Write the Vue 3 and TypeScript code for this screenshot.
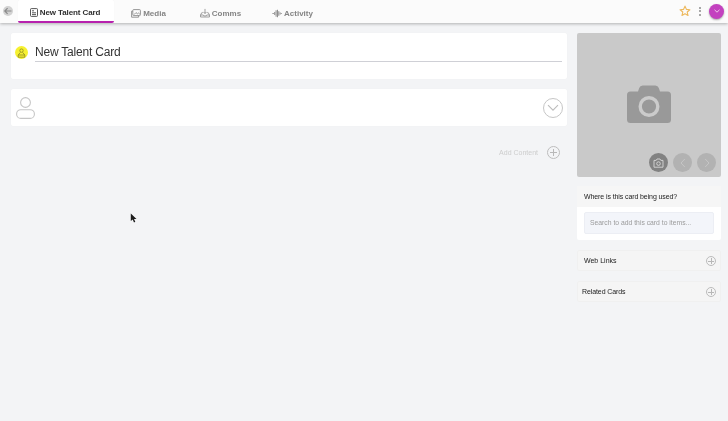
<script setup lang="ts">
const tabs = [
  { label: 'New Talent Card', key: 'card', active: true },
  { label: 'Media', key: 'media', active: false },
  { label: 'Comms', key: 'comms', active: false },
  { label: 'Activity', key: 'activity', active: false },
]
</script>

<template>
  <div class="page">
    <header class="topbar">
      <button class="back" aria-label="Back">
        <svg width="10" height="10" viewBox="0 0 10 10"><path d="M8.500 5H2M4.600 2.200 1.800 5l2.800 2.800" fill="none" stroke="#8a8a8a" stroke-width="1.200"/></svg>
      </button>
      <nav class="tabs">
        <div v-for="t in tabs" :key="t.key" class="tab" :class="[t.key, { active: t.active }]">
          <svg v-if="t.key === 'card'" width="8" height="9" viewBox="0 0 8 9" fill="none" stroke="#444" stroke-width="0.9"><rect x="0.5" y="0.6" width="7" height="7.8" rx="0.8"/><path d="M2 2.800h2M2 4.800h4M2 6.600h4"/></svg>
          <svg v-else-if="t.key === 'media'" width="10" height="9" viewBox="0 0 10 9" fill="none" stroke="#8a8a8a" stroke-width="0.9"><rect x="1.8" y="0.6" width="7.6" height="6" rx="0.8"/><path d="M1.800 2.200H.6v6h7V6.600M3 5.600l2-2 1.400 1.200 1-.8 1.500 1.300"/></svg>
          <svg v-else-if="t.key === 'comms'" width="10" height="10" viewBox="0 0 11 10" fill="none" stroke="#8a8a8a" stroke-width="0.9"><path d="M5.500.5v5M3.800 3.800l1.700 1.800 1.700-1.800M3 4.600H2L.6 7.200v2.200h9.800V7.200L9 4.600H8M.6 7.200h3l.6 1h2.600l.6-1h3"/></svg>
          <svg v-else width="10" height="9" viewBox="0 0 11 9" fill="none" stroke="#8a8a8a" stroke-width="1.100"><path d="M.5 4.500h1.500M3 2.800v3.400M4.500 1v7M6 .4v8.200M7.500 2v5M9 3.400v2.200M10 4.500h.8"/></svg>
          <span>{{ t.label }}</span>
        </div>
      </nav>
      <div class="actions">
        <svg class="star" width="12" height="12" viewBox="0 0 13 13"><path d="M6.500 1.200 8 4.700l3.800.4-2.900 2.500.9 3.800-3.300-2-3.300 2 .9-3.800L1.200 5.100 5 4.700z" fill="none" stroke="#edb95e" stroke-width="1.200" stroke-linejoin="round"/></svg>
        <div class="dots"><i></i><i></i><i></i></div>
        <div class="avatar">
          <svg width="8" height="6" viewBox="0 0 8 6"><path d="M1.500 1.800 4 4.200l2.500-2.400" fill="none" stroke="#f3d6ee" stroke-width="0.9"/></svg>
        </div>
      </div>
    </header>

    <main class="content">
      <section class="left">
        <div class="card title-card">
          <div class="badge">
            <svg width="9" height="10" viewBox="0 0 9 10" fill="none" stroke="#8f8a1e" stroke-width="0.8"><circle cx="4.500" cy="2.600" r="1.700"/><path d="M3.400 4.400 1.200 7v2.200h6.600V7L5.600 4.400"/><path d="M1.300 7h6.400"/></svg>
          </div>
          <div class="title-input">New Talent Card</div>
        </div>

        <div class="card person-card">
          <svg width="19" height="22" viewBox="0 0 19 22" fill="none" stroke="#c6c6c6" stroke-width="1.100"><circle cx="9.500" cy="5.500" r="4.900"/><rect x="0.600" y="12.700" width="17.800" height="8.700" rx="4.200"/></svg>
          <div class="chevron-circle">
            <svg width="12" height="8" viewBox="0 0 12 8"><path d="M1 1.200 6 6.200l5-5" fill="none" stroke="#bdbdbd" stroke-width="1.100"/></svg>
          </div>
        </div>

        <div class="add-row">
          <span>Add Content</span>
          <div class="plus large"></div>
        </div>
      </section>

      <aside class="right">
        <div class="photo">
          <svg class="camera" width="44" height="38" viewBox="0 0 44 38">
            <path d="M3.500 6.500H11l1.200-3.500Q13 .5 15.700.5h12.600q2.700 0 3.500 2.500L33 6.500h7.500q3.500 0 3.500 3.500v24.500q0 3.500-3.500 3.500h-37Q0 38 0 34.500V10q0-3.500 3.500-3.500z" fill="#999"/>
            <circle cx="22" cy="21.500" r="8.800" fill="none" stroke="#cbcbcb" stroke-width="3.400"/>
          </svg>
          <div class="photo-buttons">
            <div class="round dark">
              <svg width="11" height="10" viewBox="0 0 11 10" fill="none" stroke="#d8d8d8" stroke-width="0.9" stroke-linejoin="round"><path d="M1 2.400h2.200L4 1h3l.8 1.400H10v6.800H1z"/><circle cx="5.500" cy="5.600" r="1.800"/></svg>
            </div>
            <div class="round">
              <svg width="6" height="10" viewBox="0 0 6 10"><path d="M4.800 1 1 5l3.800 4" fill="none" stroke="#c6c6c6" stroke-width="1"/></svg>
            </div>
            <div class="round">
              <svg width="6" height="10" viewBox="0 0 6 10"><path d="M1.200 1 5 5 1.200 9" fill="none" stroke="#c6c6c6" stroke-width="1"/></svg>
            </div>
          </div>
        </div>

        <div class="usage">
          <div class="usage-head">Where is this card being used?</div>
          <div class="usage-body">
            <div class="search">Search to add this card to items...</div>
          </div>
        </div>

        <div class="side-row">
          <span>Web Links</span>
          <div class="plus"></div>
        </div>
        <div class="side-row related">
          <span>Related Cards</span>
          <div class="plus"></div>
        </div>
      </aside>
    </main>

    <svg class="cursor" width="8" height="11" viewBox="0 0 8 11"><path d="M.8.5v7.600l1.900-1.700 1.300 3 1.300-.6-1.300-2.900h2.500z" fill="#1c1c1c"/></svg>
  </div>
</template>

<style>
html, body { margin: 0; background: #f3f4f6; }
</style>

<style scoped>
.page {
  position: relative;
  width: 728px;
  height: 421px;
  overflow: hidden;
  background: #f3f4f6;
  font-family: "Liberation Sans", Arial, sans-serif;
  color: #333;
}
.topbar {
  height: 23px;
  box-sizing: border-box;
  display: flex;
  align-items: flex-start;
  background: #fbfbfb;
  box-shadow: 0 1px 3px rgba(0, 0, 0, 0.28);
  position: relative;
}
.back {
  width: 10px;
  height: 10px;
  margin: 6px 0 0 3px;
  padding: 0;
  border: 0;
  border-radius: 50%;
  background: #d2d2d2;
  display: flex;
  align-items: center;
  justify-content: center;
}
.tabs {
  display: flex;
  margin-left: 5px;
  will-change: opacity;
}
.tab {
  height: 23px;
  box-sizing: border-box;
  display: flex;
  align-items: center;
  justify-content: center;
  gap: 2px;
  padding-top: 3px;
  font-size: 8px;
  font-weight: 700;
  color: #858585;
  white-space: nowrap;
}
.tab.card { width: 96px; letter-spacing: -0.1px; padding-right: 2px; }
.tab.media { width: 69px; }
.tab.comms { width: 75px; }
.tab.activity { width: 69px; }
.tab.active {
  color: #2f2f2f;
  border-bottom: 2px solid #b721ae;
}
.actions {
  margin-left: auto;
  display: flex;
  align-items: center;
  height: 22px;
}
.star { margin-right: 8px; }
.dots {
  display: flex;
  flex-direction: column;
  gap: 1.500px;
  margin-right: 8px;
}
.dots i {
  width: 2px;
  height: 2px;
  background: #8d8d8d;
  border-radius: 50%;
}
.avatar {
  width: 15px;
  height: 15px;
  margin-right: 4px;
  border-radius: 50%;
  background: #c341bf;
  box-shadow: 0 1px 2px rgba(0, 0, 0, 0.35);
  display: flex;
  align-items: center;
  justify-content: center;
}
.content {
  display: flex;
  gap: 10px;
  padding: 10px 7px 0 11px;
  will-change: opacity;
}
.left { width: 556px; flex: none; }
.right { width: 144px; flex: none; }
.card {
  background: #fff;
  border-radius: 2px;
  box-shadow: 0 0 1px rgba(0, 0, 0, 0.06);
}
.title-card {
  height: 46px;
  box-sizing: border-box;
  display: flex;
  align-items: flex-start;
  padding: 12px 5px 0 4px;
}
.badge {
  width: 13px;
  height: 13px;
  margin-top: 1px;
  border-radius: 50%;
  background: #f6f130;
  display: flex;
  align-items: center;
  justify-content: center;
  flex: none;
}
.title-input {
  flex: 1;
  margin-left: 7px;
  height: 16px;
  border-bottom: 1px solid #cfd0d6;
  font-size: 12px;
  letter-spacing: -0.2px;
  line-height: 14px;
  color: #333;
}
.person-card {
  height: 37px;
  margin-top: 10px;
  box-sizing: border-box;
  display: flex;
  align-items: center;
  justify-content: space-between;
  padding: 0 4px 0 5px;
}
.chevron-circle {
  width: 18px;
  height: 18px;
  border: 1px solid #c6c6c6;
  border-radius: 50%;
  display: flex;
  align-items: center;
  justify-content: center;
}
.add-row {
  display: flex;
  align-items: center;
  justify-content: flex-end;
  gap: 9px;
  margin-top: 20px;
  padding-right: 7px;
  font-size: 7px;
  color: #cdcdcd;
}
.plus {
  width: 8px;
  height: 8px;
  border: 1px solid #bcbcbc;
  border-radius: 50%;
  flex: none;
  margin-top: 1px;
  background:
    linear-gradient(#b8b8b8, #b8b8b8) center / 6px 1px no-repeat,
    linear-gradient(#b8b8b8, #b8b8b8) center / 1px 6px no-repeat;
}
.plus.large {
  width: 11px;
  height: 11px;
  margin-top: 0;
  background:
    linear-gradient(#b8b8b8, #b8b8b8) center / 7px 1px no-repeat,
    linear-gradient(#b8b8b8, #b8b8b8) center / 1px 7px no-repeat;
}
.photo {
  height: 144px;
  background: #c9c9c9;
  border-radius: 2px;
  position: relative;
  display: flex;
  align-items: flex-start;
  justify-content: center;
}
.camera { margin-top: 52px; }
.photo-buttons {
  position: absolute;
  right: 5px;
  bottom: 5px;
  display: flex;
  gap: 5px;
}
.round {
  width: 19px;
  height: 19px;
  border-radius: 50%;
  background: #b2b2b2;
  display: flex;
  align-items: center;
  justify-content: center;
}
.round.dark { background: #828282; }
.usage {
  margin-top: 9px;
  background: #fff;
  border-radius: 2px;
}
.usage-head {
  height: 21px;
  padding-left: 7px;
  background: #f6f6f6;
  font-size: 7px;
  letter-spacing: -0.1px;
  line-height: 21px;
  color: #222;
}
.usage-body {
  padding: 5px 7px 6px 7px;
}
.search {
  height: 22px;
  padding-left: 5px;
  box-sizing: border-box;
  background: #f3f5fa;
  border: 1px solid #eceef4;
  border-radius: 2px;
  font-size: 6.800px;
  line-height: 20px;
  color: #9b9b9b;
}
.side-row {
  height: 21px;
  margin-top: 10px;
  box-sizing: border-box;
  display: flex;
  align-items: center;
  justify-content: space-between;
  padding: 0 4px 0 6px;
  background: #f5f5f5;
  border: 1px solid #f0f0f0;
  border-radius: 2px;
  font-size: 7px;
  color: #222;
}
.side-row.related { padding-left: 4px; letter-spacing: -0.1px; }
.cursor {
  position: absolute;
  left: 130px;
  top: 213px;
}
</style>
